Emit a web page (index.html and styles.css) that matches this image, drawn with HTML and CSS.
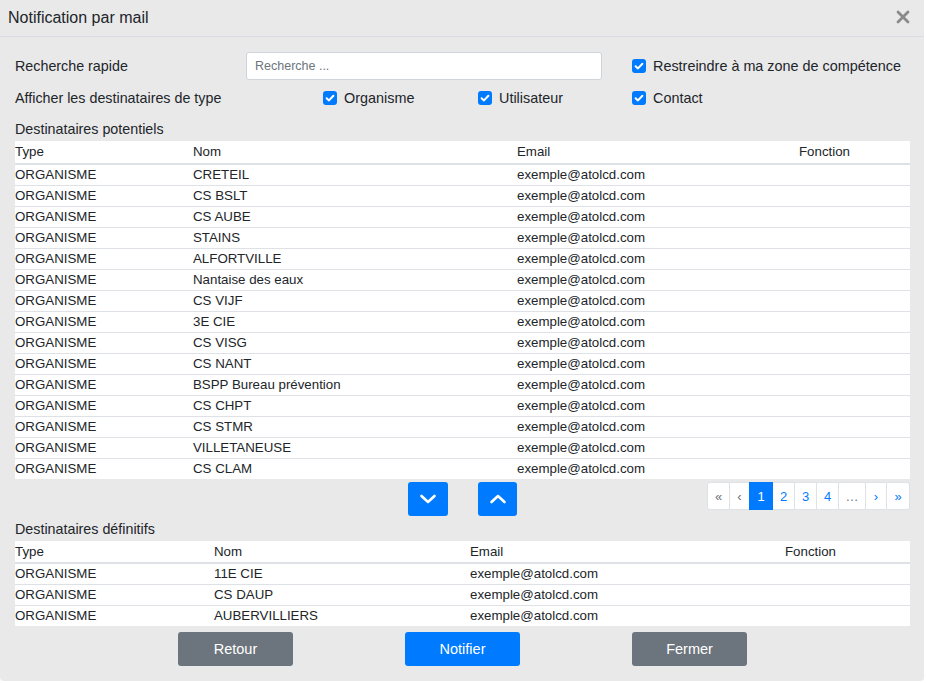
FILE: index.html
```html
<!DOCTYPE html>
<html lang="fr">
<head>
<meta charset="utf-8">
<title>Notification par mail</title>
<link rel="stylesheet" href="styles.css">
</head>
<body>
<div class="modal">
  <div class="modal-header">
    <span class="modal-title">Notification par mail</span>
    <span class="close" aria-label="Fermer"><svg viewBox="0 0 14 14" width="14" height="14"><path d="M2 2 L12 12 M12 2 L2 12" fill="none" stroke="#8a8a8a" stroke-width="2.8" stroke-linecap="round"/></svg></span>
  </div>
  <div class="modal-body">
    <div class="form-row row-search">
      <span class="label label-search">Recherche rapide</span>
      <input class="search" type="text" placeholder="Recherche ...">
      <label class="check check-restrict"><span class="box"><svg viewBox="0 0 14 14" width="14" height="14"><path d="M3.6 7.2 L6 9.4 L10.4 4.8" fill="none" stroke="#fff" stroke-width="2" stroke-linecap="round" stroke-linejoin="round"/></svg></span>Restreindre à ma zone de compétence</label>
    </div>
    <div class="form-row row-types">
      <span class="label label-types">Afficher les destinataires de type</span>
      <label class="check check-org"><span class="box"><svg viewBox="0 0 14 14" width="14" height="14"><path d="M3.6 7.2 L6 9.4 L10.4 4.8" fill="none" stroke="#fff" stroke-width="2" stroke-linecap="round" stroke-linejoin="round"/></svg></span>Organisme</label>
      <label class="check check-user"><span class="box"><svg viewBox="0 0 14 14" width="14" height="14"><path d="M3.6 7.2 L6 9.4 L10.4 4.8" fill="none" stroke="#fff" stroke-width="2" stroke-linecap="round" stroke-linejoin="round"/></svg></span>Utilisateur</label>
      <label class="check"><span class="box"><svg viewBox="0 0 14 14" width="14" height="14"><path d="M3.6 7.2 L6 9.4 L10.4 4.8" fill="none" stroke="#fff" stroke-width="2" stroke-linecap="round" stroke-linejoin="round"/></svg></span>Contact</label>
    </div>

    <div class="section-title title-potentiels">Destinataires potentiels</div>
    <table class="grid grid-potentiels">
      <colgroup><col class="c1a"><col class="c2a"><col class="c3a"><col class="c4a"></colgroup>
      <thead><tr><th>Type</th><th>Nom</th><th>Email</th><th>Fonction</th></tr></thead>
      <tbody>
        <tr><td>ORGANISME</td><td>CRETEIL</td><td>exemple@atolcd.com</td><td></td></tr>
        <tr><td>ORGANISME</td><td>CS BSLT</td><td>exemple@atolcd.com</td><td></td></tr>
        <tr><td>ORGANISME</td><td>CS AUBE</td><td>exemple@atolcd.com</td><td></td></tr>
        <tr><td>ORGANISME</td><td>STAINS</td><td>exemple@atolcd.com</td><td></td></tr>
        <tr><td>ORGANISME</td><td>ALFORTVILLE</td><td>exemple@atolcd.com</td><td></td></tr>
        <tr><td>ORGANISME</td><td>Nantaise des eaux</td><td>exemple@atolcd.com</td><td></td></tr>
        <tr><td>ORGANISME</td><td>CS VIJF</td><td>exemple@atolcd.com</td><td></td></tr>
        <tr><td>ORGANISME</td><td>3E CIE</td><td>exemple@atolcd.com</td><td></td></tr>
        <tr><td>ORGANISME</td><td>CS VISG</td><td>exemple@atolcd.com</td><td></td></tr>
        <tr><td>ORGANISME</td><td>CS NANT</td><td>exemple@atolcd.com</td><td></td></tr>
        <tr><td>ORGANISME</td><td>BSPP Bureau prévention</td><td>exemple@atolcd.com</td><td></td></tr>
        <tr><td>ORGANISME</td><td>CS CHPT</td><td>exemple@atolcd.com</td><td></td></tr>
        <tr><td>ORGANISME</td><td>CS STMR</td><td>exemple@atolcd.com</td><td></td></tr>
        <tr><td>ORGANISME</td><td>VILLETANEUSE</td><td>exemple@atolcd.com</td><td></td></tr>
        <tr><td>ORGANISME</td><td>CS CLAM</td><td>exemple@atolcd.com</td><td></td></tr>
      </tbody>
    </table>

    <div class="transfer-bar">
      <div class="spacer"></div>
      <div class="arrows">
        <button class="arrow-btn" type="button" aria-label="Ajouter"><svg viewBox="0 0 20 20" width="20" height="20"><path d="M3.5 7 L10 13 L16.5 7" fill="none" stroke="#fff" stroke-width="2.6" stroke-linecap="round" stroke-linejoin="round"/></svg></button>
        <button class="arrow-btn" type="button" aria-label="Retirer"><svg viewBox="0 0 20 20" width="20" height="20"><path d="M3.5 13 L10 7 L16.5 13" fill="none" stroke="#fff" stroke-width="2.6" stroke-linecap="round" stroke-linejoin="round"/></svg></button>
      </div>
      <ul class="pagination">
        <li class="pg w22 disabled">«</li>
        <li class="pg w20 disabled">‹</li>
        <li class="pg w23 active">1</li>
        <li class="pg w22">2</li>
        <li class="pg w22">3</li>
        <li class="pg w22">4</li>
        <li class="pg w27 disabled">…</li>
        <li class="pg w21">›</li>
        <li class="pg w23">»</li>
      </ul>
    </div>

    <div class="section-title title-definitifs">Destinataires définitifs</div>
    <table class="grid grid-definitifs">
      <colgroup><col class="c1b"><col class="c2b"><col class="c3b"><col class="c4b"></colgroup>
      <thead><tr><th>Type</th><th>Nom</th><th>Email</th><th>Fonction</th></tr></thead>
      <tbody>
        <tr><td>ORGANISME</td><td>11E CIE</td><td>exemple@atolcd.com</td><td></td></tr>
        <tr><td>ORGANISME</td><td>CS DAUP</td><td>exemple@atolcd.com</td><td></td></tr>
        <tr><td>ORGANISME</td><td>AUBERVILLIERS</td><td>exemple@atolcd.com</td><td></td></tr>
      </tbody>
    </table>

    <div class="actions">
      <button class="btn btn-secondary" type="button">Retour</button>
      <button class="btn btn-primary" type="button">Notifier</button>
      <button class="btn btn-secondary" type="button">Fermer</button>
    </div>
  </div>
</div>
</body>
</html>
```

FILE: styles.css
```css
* { box-sizing: border-box; }

html, body {
  margin: 0;
  padding: 0;
  background: #ffffff;
}

body {
  font-family: "Liberation Sans", Arial, sans-serif;
  color: #212529;
}

.modal {
  width: 924px;
  height: 681px;
  background: #e9e9e9;
  border-radius: 0 0 4px 4px;
  overflow: hidden;
}

.modal-header {
  height: 37px;
  display: flex;
  align-items: center;
  justify-content: space-between;
  padding: 0 14px 0 8px;
  border-bottom: 1px solid #d9dde3;
}

.modal-title {
  font-size: 16px;
  color: #212529;
  padding-bottom: 1px;
}

.close {
  display: flex;
  width: 14px;
  height: 14px;
  margin-bottom: 2px;
}

.modal-body {
  padding: 15px 14px 0 15px;
}

.form-row {
  display: flex;
  align-items: center;
  font-size: 14.3px;
}

.row-search {
  height: 28px;
}

.row-types {
  height: 20px;
  margin-top: 8px;
}

.label-search { width: 231px; }
.label-types { width: 308px; }

.search {
  width: 356px;
  height: 28px;
  border: 1px solid #ced4da;
  border-radius: 3px;
  background: #fff;
  padding: 0 8px;
  font-family: "Liberation Sans", Arial, sans-serif;
  font-size: 12.5px;
  color: #495057;
  margin-right: 30px;
}

.search::placeholder { color: #6c757d; }

.check {
  display: flex;
  align-items: center;
  font-size: 14.4px;
}

.check-org { width: 155px; }
.check-user { width: 154px; }

.box {
  width: 14px;
  height: 14px;
  border-radius: 3px;
  background: #007bff;
  display: inline-flex;
  margin-right: 7px;
}

.section-title {
  font-size: 14.3px;
  line-height: 20px;
}

.title-potentiels { margin-top: 11px; }
.title-definitifs { margin-top: 2px; }

.grid {
  width: 895px;
  border-collapse: collapse;
  table-layout: fixed;
  background: #fff;
  font-size: 13.3px;
  margin-top: 2px;
}

.grid th {
  font-weight: normal;
  text-align: left;
  height: 22px;
  padding: 0;
  line-height: 19px;
  vertical-align: middle;
  border-bottom: 2px solid #dee2e6;
}

.grid-potentiels th {
  height: 23px;
  padding-bottom: 1px;
}

.grid td {
  height: 21px;
  padding: 0;
  line-height: 19px;
  vertical-align: middle;
  border-bottom: 1px solid #dee2e6;
}

.grid tbody tr:last-child td { border-bottom: none; }

.c1a { width: 178px; }
.c2a { width: 324px; }
.c3a { width: 282px; }
.c4a { width: 111px; }

.c1b { width: 199px; }
.c2b { width: 256px; }
.c3b { width: 315px; }
.c4b { width: 125px; }

.grid-definitifs { margin-top: 2px; }

.transfer-bar {
  display: grid;
  grid-template-columns: 1fr auto 1fr;
  align-items: start;
  width: 895px;
  margin-top: 3px;
  height: 35px;
}

.arrows {
  display: flex;
  gap: 30px;
}

.arrow-btn {
  width: 40px;
  height: 34px;
  border: none;
  border-radius: 3px;
  background: #007bff;
  display: flex;
  align-items: center;
  justify-content: center;
  padding: 0;
}

.arrow-btn:last-child { width: 39px; }

.pagination {
  justify-self: end;
  display: flex;
  list-style: none;
  margin: 0;
  padding: 0;
  height: 28px;
}

.pg {
  height: 28px;
  display: flex;
  align-items: center;
  justify-content: center;
  background: #fff;
  border: 1px solid #dee2e6;
  margin-left: -1px;
  font-size: 13px;
  color: #007bff;
}

.pg:first-child {
  margin-left: 0;
  border-radius: 3px 0 0 3px;
}

.pg:last-child { border-radius: 0 3px 3px 0; }

.pg.disabled { color: #6c757d; }

.pg.active {
  background: #007bff;
  border-color: #007bff;
  color: #fff;
  position: relative;
}

.w20 { width: 21px; }
.w21 { width: 22px; }
.w22 { width: 23px; }
.w23 { width: 24px; }
.w27 { width: 28px; }

.actions {
  display: flex;
  justify-content: center;
  gap: 112px;
  width: 895px;
  margin-top: 6px;
}

.btn {
  width: 115px;
  height: 34px;
  border: none;
  border-radius: 3px;
  color: #fff;
  font-family: "Liberation Sans", Arial, sans-serif;
  font-size: 14.5px;
}

.btn-secondary { background: #6c757d; }
.btn-primary { background: #007bff; }
```
